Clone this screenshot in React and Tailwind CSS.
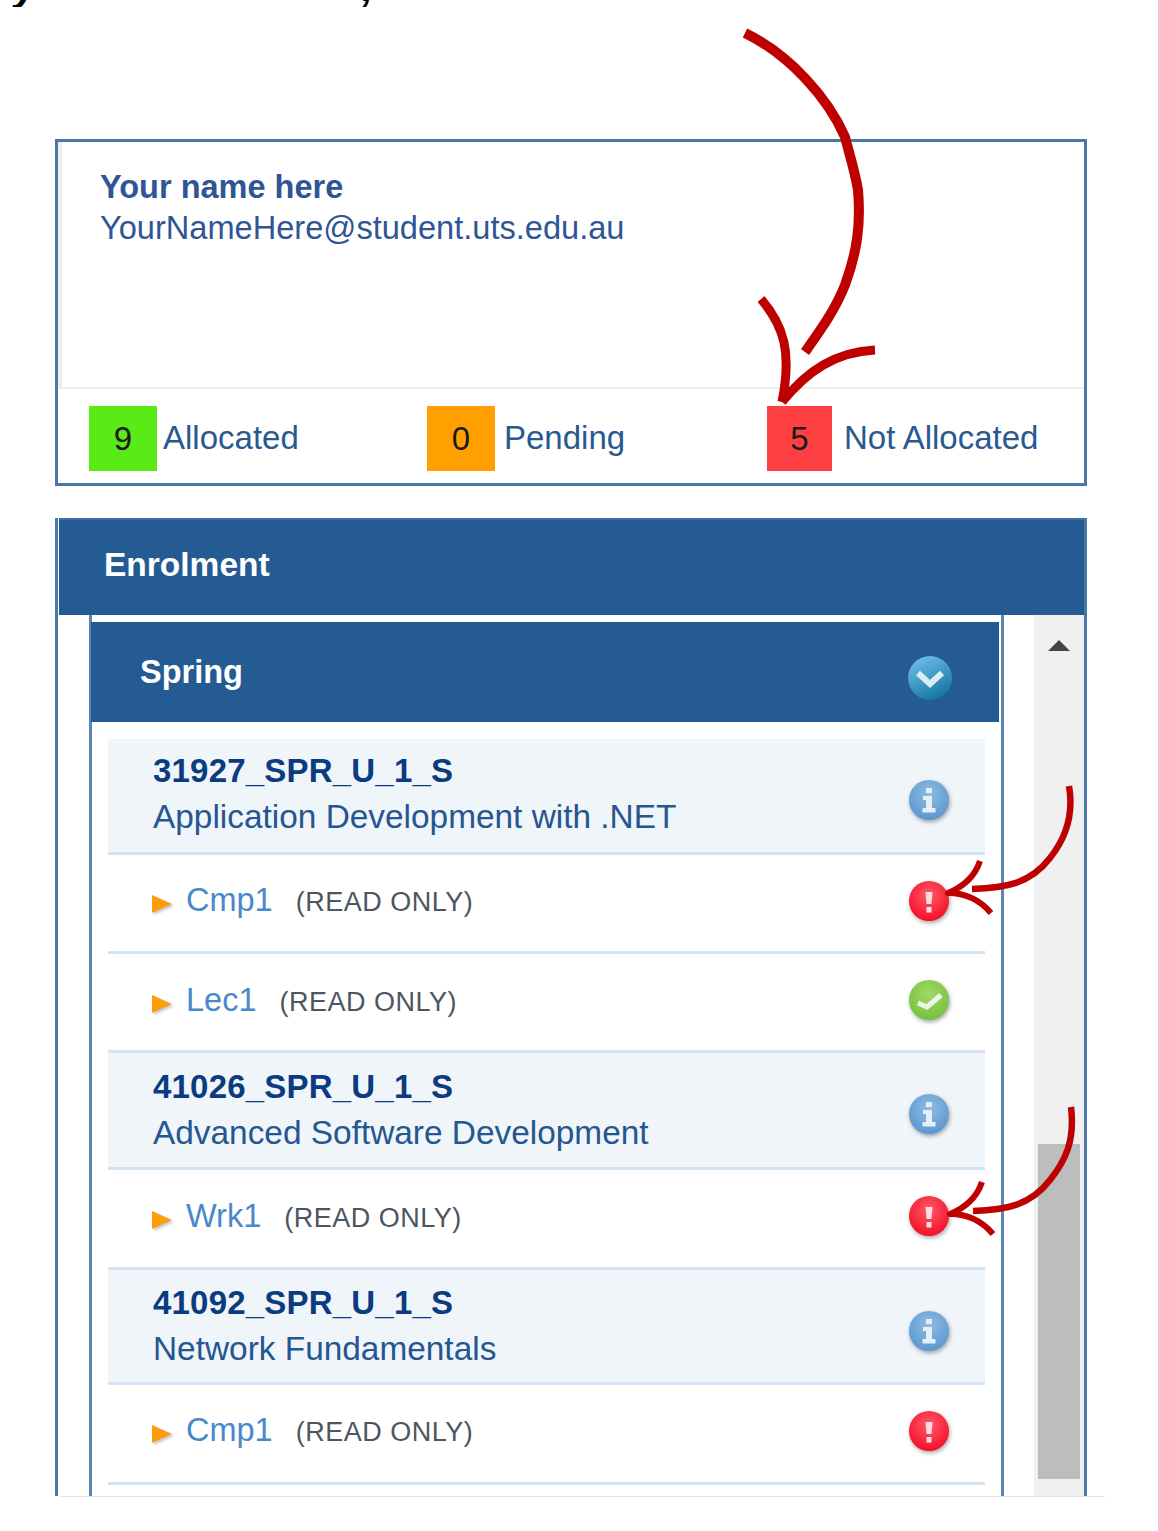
import React from "react";

const ROWS = [
  { type: "unit", h: "h-[116px]", pt: "pt-[9px]", code: "31927_SPR_U_1_S", name: "Application Development with .NET" },
  { type: "class", h: "h-[99px]", pt: "pt-[23px]", label: "Cmp1", status: "error" },
  { type: "class", h: "h-[99px]", pt: "pt-[24px]", label: "Lec1", status: "ok" },
  { type: "unit", h: "h-[117px]", pt: "pt-[11px]", code: "41026_SPR_U_1_S", name: "Advanced Software Development" },
  { type: "class", h: "h-[100px]", pt: "pt-[24px]", label: "Wrk1", status: "error" },
  { type: "unit", h: "h-[115px]", pt: "pt-[10px]", code: "41092_SPR_U_1_S", name: "Network Fundamentals" },
  { type: "class", h: "h-[100px]", pt: "pt-[23px]", label: "Cmp1", status: "error" },
];

const STATS = [
  { value: 9, label: "Allocated", cell: "w-[338px]", box: "w-[68px] bg-[#5aea16]", gap: "ml-[6px]" },
  { value: 0, label: "Pending", cell: "w-[340px]", box: "w-[68px] bg-[#ffa000]", gap: "ml-[9px]" },
  { value: 5, label: "Not Allocated", cell: "w-[280px]", box: "w-[65px] bg-[#ff4043]", gap: "ml-[12px]" },
];

const STATUS_COLORS = {
  info: ["#8fbde4", "#5c97cf"],
  error: ["#ff5a6a", "#f50f26"],
  ok: ["#a0d868", "#74c23f"],
};

function StatusIcon({ kind }) {
  const [light, dark] = STATUS_COLORS[kind];
  const gradId = `status-${kind}`;
  return (
    <svg width="46" height="46" viewBox="0 0 46 46" className="drop-shadow-[1px_2px_2px_rgba(0,0,0,0.35)]">
      <defs>
        <radialGradient id={gradId} cx="50%" cy="35%" r="65%">
          <stop offset="0%" stopColor={light} />
          <stop offset="100%" stopColor={dark} />
        </radialGradient>
      </defs>
      <circle cx="23" cy="23" r="20" fill={`url(#${gradId})`} />
      {kind === "info" && (
        <g fill="#e6eff8">
          <rect x="20" y="11" width="6" height="5" />
          <path d="M17 19h9v12h3.5v4.5H16.5V31h3.5v-8h-3z" />
        </g>
      )}
      {kind === "error" && (
        <g fill="#ffdde0">
          <path d="M19.5 14h7l-1 12h-5z" />
          <rect x="20.5" y="29" width="5" height="5.5" />
        </g>
      )}
      {kind === "ok" && (
        <polyline points="12,26 21,30 35,18" fill="none" stroke="#eef7e4" strokeWidth="5" />
      )}
    </svg>
  );
}

function ChevronBadge() {
  return (
    <svg width="46" height="46" viewBox="0 0 46 46">
      <defs>
        <linearGradient id="spring-badge" x1="0.2" y1="0" x2="0.7" y2="1">
          <stop offset="0%" stopColor="#6fc0ea" />
          <stop offset="100%" stopColor="#12739f" />
        </linearGradient>
      </defs>
      <circle cx="23" cy="23" r="22" fill="url(#spring-badge)" />
      <polyline points="11,18 23,29 35,18" fill="none" stroke="#dcecf5" strokeWidth="6" />
    </svg>
  );
}

function UnitRow({ row }) {
  return (
    <div className={`${row.h} flex justify-between bg-[#f0f5fa] border-b-[3px] border-[#d4e3f3]`}>
      <div className={`${row.pt} pl-[45px] flex flex-col`}>
        <span className="text-[33px] leading-[46px] font-bold text-[#0b3b80] tracking-[0.2px]">{row.code}</span>
        <span className="text-[33.4px] leading-[46px] text-[#25568f]">{row.name}</span>
      </div>
      <div className="mr-[33px] mt-[38px]">
        <StatusIcon kind="info" />
      </div>
    </div>
  );
}

function ClassRow({ row }) {
  return (
    <div className={`${row.h} flex justify-between border-b-[3px] border-[#d4e3f3]`}>
      <div className={`${row.pt} pl-[44px] flex items-center self-start`}>
        <svg width="22" height="20" viewBox="0 0 22 20" className="mt-[8px] drop-shadow-[2px_2px_1px_rgba(0,0,0,0.2)]">
          <polygon points="0,1 20,10 0,19" fill="#fb9d0d" />
        </svg>
        <span className="ml-[12px] text-[32.5px] leading-[40px] text-[#4889ca]">{row.label}</span>
        <span className="ml-[23px] mt-[4px] text-[27px] leading-[40px] text-[#4d5560] tracking-[0.5px]">(READ ONLY)</span>
      </div>
      <div className="mr-[33px] mt-[23px]">
        <StatusIcon kind={row.status} />
      </div>
    </div>
  );
}

// the hand drawn red arrows sit over everything else
function Annotations() {
  return (
    <svg width="1158" height="1531" viewBox="0 0 1158 1531" className="absolute top-0 left-0 pointer-events-none" fill="none" stroke="#bf0000" strokeLinejoin="round">
      <path strokeWidth="10" d="M745 33C790 55 828 98 845 137C851 160 855 172 858 190C861 225 857 252 845 285C835 310 822 328 805 352" />
      <path strokeWidth="9" d="M761 299C784 326 792 352 782 402" />
      <path strokeWidth="9" d="M875 350C836 352 808 370 782 402" />
      <path strokeWidth="6.5" d="M1069 786C1074 815 1066 838 1050 858C1030 884 1005 888 972 889" />
      <path strokeWidth="6" d="M980 861C975 876 965 886 948 893C965 893 980 900 991 913" />
      <path strokeWidth="6.5" d="M1071 1107C1075 1140 1066 1160 1050 1180C1030 1206 1005 1210 973 1211" />
      <path strokeWidth="6" d="M982 1182C977 1197 967 1207 950 1214C967 1214 982 1221 993 1234" />
    </svg>
  );
}

export default function App() {
  return (
    <div className="relative w-[1158px] h-[1531px] overflow-hidden bg-white font-['Liberation_Sans',Arial,sans-serif]">
      <div className="h-[139px]">
        <div className="h-[7px] overflow-hidden pl-[14px]">
          <div className="flex -mt-[33px] text-[40px] leading-[40px] font-bold italic text-black">
            <span>y</span>
            <span className="ml-[326px]">,</span>
          </div>
        </div>
      </div>

      <div className="ml-[55px] w-[1032px] h-[347px] border-[3px] border-[#4a78a8] flex flex-col">
        <div className="h-[247px] border-l-[4px] border-b-2 border-[#eceef2] pl-[38px] pt-[25px]">
          <div className="text-[32.5px] leading-[41px] font-bold text-[#2f5596]">Your name here</div>
          <div className="text-[32.6px] leading-[39px] text-[#2f5596]">YourNameHere@student.uts.edu.au</div>
        </div>
        <div className="flex pl-[31px] pt-[17px]">
          {STATS.map((s) => (
            <div key={s.label} className={`${s.cell} flex items-center`}>
              <div className={`${s.box} h-[65px] flex items-center justify-center text-[33px] text-[#1a1a1a]`}>{s.value}</div>
              <span className={`${s.gap} pb-[2px] text-[33px] text-[#28598f]`}>{s.label}</span>
            </div>
          ))}
        </div>
      </div>

      <div className="ml-[55px] mt-[32px] w-[1032px] h-[978px] overflow-hidden border-x-[3px] border-[#4a78a8]">
        <div className="h-[97px] ml-[1px] flex items-center pl-[45px] pb-[5px] bg-[#255b93] border-t-2 border-[#3e6fa3]">
          <span className="text-[33.5px] font-bold text-white">Enrolment</span>
        </div>
        <div className="flex items-stretch h-full">
          <div className="ml-[31px] w-[915px] h-full border-x-[3px] border-[#5a86b5] pt-[7px]">
            <div className="h-[100px] -ml-[1px] mr-[2px] flex items-center justify-between pl-[49px] pr-[46px] bg-[#255b93]">
              <span className="text-[32.5px] font-bold text-white">Spring</span>
              <div className="mt-[12px]">
                <ChevronBadge />
              </div>
            </div>
            <div className="px-[16px] pt-[17px]">
              {ROWS.map((row, i) =>
                row.type === "unit" ? <UnitRow key={i} row={row} /> : <ClassRow key={i} row={row} />
              )}
            </div>
          </div>
          <div className="ml-[30px] w-[50px] h-full bg-[#f0f0f0] flex flex-col items-center px-[4px]">
            <div className="mt-[25px] w-0 h-0 border-x-[11px] border-x-transparent border-b-[11px] border-b-[#444444]" />
            <div className="mt-[493px] w-full h-[335px] bg-[#bdbdbd]" />
          </div>
        </div>
      </div>
      <div className="ml-[60px] w-[1045px] h-[1px] bg-[#e2e2e2]" />

      <Annotations />
    </div>
  );
}
